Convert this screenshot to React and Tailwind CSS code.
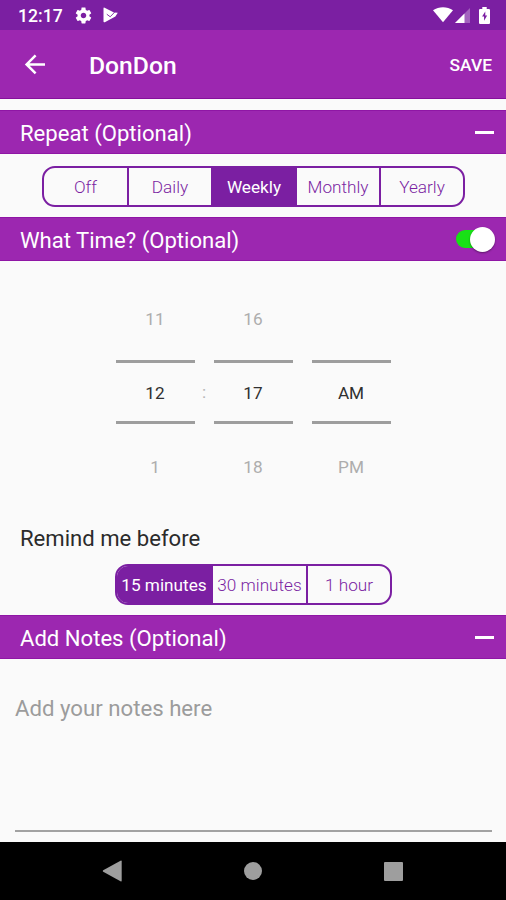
import React, { useState } from 'react';
import { clsx } from 'clsx';

const REPEAT_OPTIONS = [
  { label: 'Off', width: 'w-[83px]' },
  { label: 'Daily', width: 'w-[84px]' },
  { label: 'Weekly', width: 'w-[84px]' },
  { label: 'Monthly', width: 'w-[84px]' },
  { label: 'Yearly', width: 'w-[84px]' },
];

const REMIND_OPTIONS = [
  { label: '15 minutes', width: 'w-[94px]' },
  { label: '30 minutes', width: 'w-[95px]' },
  { label: '1 hour', width: 'w-[84px]' },
];

function StatusBar() {
  return (
    <div className="flex h-[30px] items-center bg-[#7b1fa2] pl-[18px] pr-[16px] text-white">
      <span className="w-[57px] text-[17.6px] font-medium leading-[30px] pt-[2px]">12:17</span>
      <svg className="-ml-px mt-px h-[19px] w-[19px]" viewBox="0 0 24 24" fill="currentColor">
        <path d="M19.43 12.98c.04-.32.07-.64.07-.98s-.03-.66-.07-.98l2.11-1.65c.19-.15.24-.42.12-.64l-2-3.46c-.12-.22-.39-.3-.61-.22l-2.49 1c-.52-.4-1.08-.73-1.69-.98l-.38-2.65C14.46 2.18 14.25 2 14 2h-4c-.25 0-.46.18-.49.42l-.38 2.65c-.61.25-1.17.59-1.69.98l-2.49-1c-.23-.09-.49 0-.61.22l-2 3.46c-.13.22-.07.49.12.64l2.11 1.65c-.04.32-.07.65-.07.98s.03.66.07.98l-2.11 1.65c-.19.15-.24.42-.12.64l2 3.46c.12.22.39.3.61.22l2.49-1c.52.4 1.08.73 1.69.98l.38 2.65c.03.24.24.42.49.42h4c.25 0 .46-.18.49-.42l.38-2.65c.61-.25 1.17-.59 1.69-.98l2.49 1c.23.09.49 0 .61-.22l2-3.46c.12-.22.07-.49-.12-.64l-2.11-1.65zM12 15.5c-1.93 0-3.5-1.57-3.5-3.5s1.57-3.5 3.5-3.5 3.5 1.57 3.5 3.5-1.57 3.5-3.5 3.5z" />
      </svg>
      <svg className="ml-[10px] h-[16px] w-[16px]" viewBox="0 0 16 16">
        <path d="M.5 1.4Q.5.2 1.6.8L11 5.6 14.8 5.8 12.4 9.4 1.8 15.2Q.5 15.6.5 14.6Z" fill="#fff" />
        <path d="M3.8 7.2 7.2 9.8 11.6 5.2" fill="none" stroke="#7b1fa2" strokeWidth=".9" />
      </svg>
      <div className="ml-auto flex items-center">
        <svg className="h-[16px] w-[20px]" viewBox="0 0 20 16" fill="currentColor">
          <path d="M0 3.2C6-.9 14-.9 20 3.2L10 15.2Z" />
        </svg>
        <svg className="ml-[2px] h-[16px] w-[16px]" viewBox="0 0 16 16" fill="currentColor">
          <path d="M0 16 15 1V16Z" opacity=".3" />
          <path d="M0 16 9.5 6.5V16Z" />
        </svg>
        <svg className="ml-[8px] h-[17px] w-[11px]" viewBox="0 0 10 17" preserveAspectRatio="none">
          <path d="M3 0H7V2H9Q10 2 10 3V16Q10 17 9 17H1Q0 17 0 16V3Q0 2 1 2H3Z" fill="#fff" />
          <path d="M5.7 4.5 2.8 9.6H4.6V13.8L7.4 8.6H5.7Z" fill="#7b1fa2" />
        </svg>
      </div>
    </div>
  );
}

function AppBar() {
  return (
    <header className="flex h-[69px] items-center border-b border-[#86109c] bg-[#9c27b0] pl-[23px] pr-[14px] text-white">
      <svg className="h-[24px] w-[24px]" viewBox="0 0 24 24" fill="none" stroke="currentColor" strokeWidth="2.5">
        <path d="M22 12.4H3.5M12.6 3.4 3.6 12.4l9 9" />
      </svg>
      <h1 className="ml-[42px] pt-[3px] text-[24.7px] font-medium leading-[30px]">DonDon</h1>
      <button type="button" className="ml-auto pt-[3px] text-[17.4px] font-medium">SAVE</button>
    </header>
  );
}

function SectionHeader({ title, children }) {
  return (
    <div className="flex h-[44px] items-center justify-between border-y border-[#8f16a5] bg-[#9c27b0] pl-[20px] pr-[12px] text-white">
      <h2 className="pt-[2px] text-[22.1px] leading-[30px]">{title}</h2>
      {children}
    </div>
  );
}

function Minus() {
  return <span className="h-[3px] w-[19px] bg-white" />;
}

function Segmented({ options, value, onChange }) {
  return (
    <div className="flex h-[41px] overflow-hidden rounded-[13px] border-2 border-[#7b1fa2]">
      {options.map(({ label, width }, i) => (
        <button
          key={label}
          type="button"
          onClick={() => onChange(label)}
          className={clsx(
            'flex shrink-0 items-center justify-center whitespace-nowrap pt-[2px] text-[17.2px]',
            width,
            i > 0 && 'border-l-2 border-[#7b1fa2]',
            value === label ? 'bg-[#7b1fa2] text-white' : 'font-light text-[#7b1fa2]'
          )}
        >
          {label}
        </button>
      ))}
    </div>
  );
}

function PickerColumn({ prev, current, next }) {
  return (
    <div className="flex w-[79px] flex-col text-center text-[17.2px] text-[#adadad]">
      <span className="h-[74px] pt-[20px] leading-[26px]">{prev}</span>
      <span className="h-[64px] border-y-[3px] border-[#9d9d9d] leading-[60px] text-[#303030]">{current}</span>
      <span className="h-[74px] pt-[30px] leading-[26px]">{next}</span>
    </div>
  );
}

export default function App() {
  const [repeat, setRepeat] = useState('Weekly');
  const [remind, setRemind] = useState('15 minutes');
  const [timeOn, setTimeOn] = useState(true);

  return (
    <div className="flex h-[900px] w-[506px] flex-col overflow-hidden bg-[#fafafa] font-['Roboto',sans-serif]">
      <StatusBar />
      <AppBar />

      <div className="pt-[11px]">
        <SectionHeader title="Repeat (Optional)">
          <Minus />
        </SectionHeader>
      </div>
      <div className="flex h-[63px] items-start pl-[42px] pt-[12px]">
        <Segmented options={REPEAT_OPTIONS} value={repeat} onChange={setRepeat} />
      </div>

      <SectionHeader title="What Time? (Optional)">
        <button
          type="button"
          role="switch"
          aria-checked={timeOn}
          onClick={() => setTimeOn(!timeOn)}
          className={clsx(
            'flex h-[18px] w-[38px] items-center rounded-full',
            timeOn ? 'justify-end bg-[#18e016]' : 'justify-start bg-[#c9c9c9]'
          )}
        >
          <span className="-mr-px h-[25px] w-[25px] shrink-0 rounded-full bg-white shadow-[0_1px_2px_rgba(0,0,0,0.4)]" />
        </button>
      </SectionHeader>

      <div className="flex h-[263px] justify-center pt-[25px]">
        <PickerColumn prev="11" current="12" next="1" />
        <span className="w-[19px] pt-[93px] text-center text-[17.2px] leading-[26px] text-[#b5b5b5]">:</span>
        <PickerColumn prev="16" current="17" next="18" />
        <span className="w-[19px]" />
        <PickerColumn prev="" current="AM" next="PM" />
      </div>

      <p className="-mt-px h-[41px] pl-[20px] text-[22.1px] leading-[30px] text-[#2b2b2b]">Remind me before</p>
      <div className="flex h-[51px] items-start pl-[115px]">
        <Segmented options={REMIND_OPTIONS} value={remind} onChange={setRemind} />
      </div>

      <SectionHeader title="Add Notes (Optional)">
        <Minus />
      </SectionHeader>
      <div className="ml-[15px] mr-[14px] h-[173px] border-b-2 border-[#a2a2a2] pt-[34px]">
        <p className="text-[22.2px] leading-[30px] text-[#9c9c9c]">Add your notes here</p>
      </div>

      <nav className="mt-auto flex h-[58px] items-center justify-between bg-black pl-[102px] pr-[103px]">
        <svg className="h-[22px] w-[20px]" viewBox="0 0 20 22" fill="#9e9e9e">
          <path d="M18.5.8Q19.7.2 19.7 1.5V20.5Q19.7 21.8 18.5 21.2L1.2 11.8Q.2 11 1.2 10.2Z" />
        </svg>
        <span className="h-[18px] w-[18px] rounded-full bg-[#9e9e9e]" />
        <span className="h-[19px] w-[19px] rounded-[1px] bg-[#9e9e9e]" />
      </nav>
    </div>
  );
}
